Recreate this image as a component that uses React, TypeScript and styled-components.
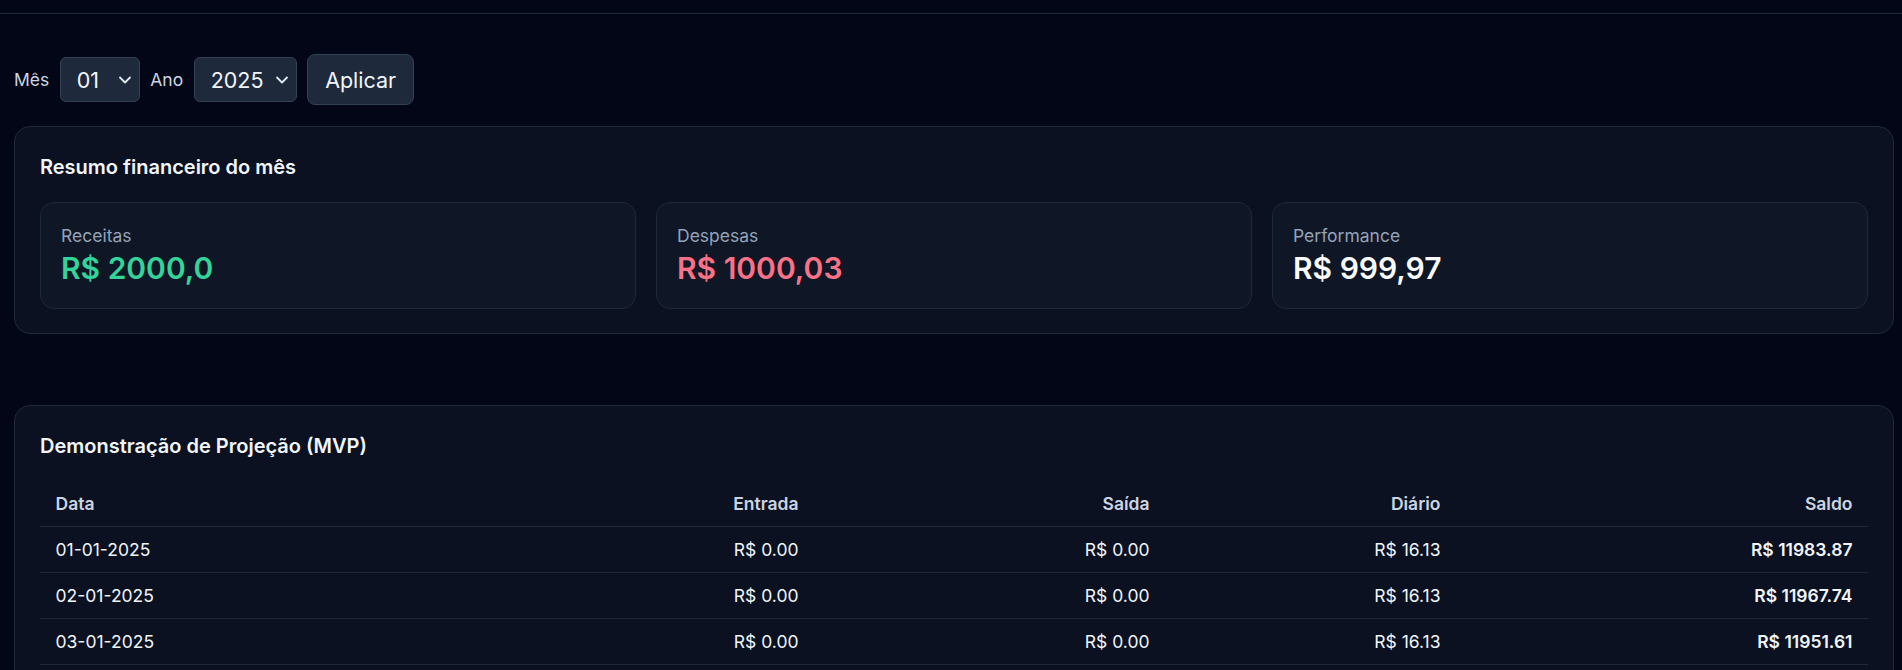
import React from "react";
import styled, { createGlobalStyle } from "styled-components";
import { ChevronDown } from "lucide-react";

const GlobalStyle = createGlobalStyle`
  html, body {
    margin: 0;
    padding: 0;
    background: #020617;
    color: #f1f5f9;
    font-family: Inter, "Noto Sans", "Liberation Sans", sans-serif;
  }
  * { box-sizing: border-box; }
`;

const Page = styled.div`
  min-height: 100vh;
  background: #020617;
`;

const TopBar = styled.header`
  height: 14px;
  border-bottom: 1px solid #1e293b;
`;

const Main = styled.main`
  padding: 40px 8px 40px 14px;
`;

const FilterBar = styled.form`
  display: flex;
  align-items: center;
  gap: 10.5px;
  margin-bottom: 21px;
`;

const FilterLabel = styled.label`
  font-size: 17.5px;
  line-height: 25px;
  color: #cbd5e1;
`;

const SelectWrap = styled.div<{ $w: number }>`
  position: relative;
  width: ${(p) => p.$w}px;
  height: 45px;
`;

const Select = styled.select`
  appearance: none;
  -webkit-appearance: none;
  width: 100%;
  height: 100%;
  margin: 0;
  padding: 0 0 0 16px;
  background: #1e293b;
  border: 1px solid #334155;
  border-radius: 6px;
  color: #f1f5f9;
  font-family: inherit;
  font-size: 21.5px;
  outline: none;
`;

const Chevron = styled(ChevronDown)`
  position: absolute;
  right: 5px;
  top: 50%;
  transform: translateY(-50%);
  color: #e2e8f0;
  pointer-events: none;
`;

const ApplyButton = styled.button`
  width: 107px;
  height: 51px;
  background: #1e293b;
  border: 1px solid #334155;
  border-radius: 8px;
  color: #f1f5f9;
  font-family: inherit;
  font-size: 21.5px;
  cursor: pointer;
`;

const Card = styled.section<{ $mb?: number }>`
  background: #0b1121;
  border: 1px solid #1e293b;
  border-radius: 16px;
  padding: 25px 25px 24px;
  margin-bottom: ${(p) => p.$mb ?? 0}px;
`;

const CardTitle = styled.h2`
  margin: 0 0 20px;
  font-size: 20px;
  line-height: 30px;
  font-weight: 600;
  color: #f1f5f9;
`;

const StatGrid = styled.div`
  display: grid;
  grid-template-columns: repeat(3, 1fr);
  gap: 20px;
`;

const StatCard = styled.div`
  background: #0f1626;
  border: 1px solid #1e293b;
  border-radius: 14px;
  padding: 20px;
`;

const StatLabel = styled.div`
  font-size: 17.5px;
  line-height: 25px;
  color: #94a3b8;
`;

const StatValue = styled.div<{ $color: string }>`
  font-size: 30px;
  line-height: 40px;
  font-weight: 600;
  color: ${(p) => p.$color};
`;

const Table = styled.table`
  width: 100%;
  border-collapse: collapse;
  table-layout: fixed;
`;

const Th = styled.th<{ $align?: string }>`
  padding: 10px 15.5px;
  font-size: 17.5px;
  line-height: 25px;
  font-weight: 600;
  color: #cbd5e1;
  text-align: ${(p) => p.$align ?? "left"};
  border-bottom: 1px solid #1e293b;
`;

const Td = styled.td<{ $align?: string; $strong?: boolean }>`
  padding: 10px 15.5px;
  font-size: 17.5px;
  line-height: 25px;
  font-weight: ${(p) => (p.$strong ? 600 : 400)};
  color: #f1f5f9;
  text-align: ${(p) => p.$align ?? "left"};
  border-bottom: 1px solid #1e293b;
  white-space: nowrap;
`;

const months = ["01", "02", "03", "04", "05", "06", "07", "08", "09", "10", "11", "12"];
const years = ["2024", "2025", "2026"];

const rows = Array.from({ length: 31 }, (_, i) => {
  const day = String(i + 1).padStart(2, "0");
  const saldo = 11983.87 - i * 16.13;
  return {
    data: `${day}-01-2025`,
    entrada: "R$ 0.00",
    saida: "R$ 0.00",
    diario: "R$ 16.13",
    saldo: `R$ ${saldo.toFixed(2)}`,
  };
});

export default function App() {
  return (
    <Page>
      <GlobalStyle />
      <TopBar />
      <Main>
        <FilterBar onSubmit={(e) => e.preventDefault()}>
          <FilterLabel htmlFor="mes">Mês</FilterLabel>
          <SelectWrap $w={80}>
            <Select id="mes" defaultValue="01">
              {months.map((m) => (
                <option key={m} value={m}>
                  {m}
                </option>
              ))}
            </Select>
            <Chevron size={20} strokeWidth={2.2} />
          </SelectWrap>
          <FilterLabel htmlFor="ano">Ano</FilterLabel>
          <SelectWrap $w={103}>
            <Select id="ano" defaultValue="2025">
              {years.map((y) => (
                <option key={y} value={y}>
                  {y}
                </option>
              ))}
            </Select>
            <Chevron size={20} strokeWidth={2.2} />
          </SelectWrap>
          <ApplyButton type="submit">Aplicar</ApplyButton>
        </FilterBar>

        <Card $mb={71}>
          <CardTitle>Resumo financeiro do mês</CardTitle>
          <StatGrid>
            <StatCard>
              <StatLabel>Receitas</StatLabel>
              <StatValue $color="#34d399">R$ 2000,0</StatValue>
            </StatCard>
            <StatCard>
              <StatLabel>Despesas</StatLabel>
              <StatValue $color="#fb7185">R$ 1000,03</StatValue>
            </StatCard>
            <StatCard>
              <StatLabel>Performance</StatLabel>
              <StatValue $color="#f8fafc">R$ 999,97</StatValue>
            </StatCard>
          </StatGrid>
        </Card>

        <Card>
          <CardTitle>Demonstração de Projeção (MVP)</CardTitle>
          <Table>
            <colgroup>
              <col style={{ width: 300 }} />
              <col style={{ width: 474 }} />
              <col style={{ width: 351 }} />
              <col style={{ width: 291 }} />
              <col style={{ width: 412 }} />
            </colgroup>
            <thead>
              <tr>
                <Th>Data</Th>
                <Th $align="right">Entrada</Th>
                <Th $align="right">Saída</Th>
                <Th $align="right">Diário</Th>
                <Th $align="right">Saldo</Th>
              </tr>
            </thead>
            <tbody>
              {rows.map((r) => (
                <tr key={r.data}>
                  <Td>{r.data}</Td>
                  <Td $align="right">{r.entrada}</Td>
                  <Td $align="right">{r.saida}</Td>
                  <Td $align="right">{r.diario}</Td>
                  <Td $align="right" $strong>
                    {r.saldo}
                  </Td>
                </tr>
              ))}
            </tbody>
          </Table>
        </Card>
      </Main>
    </Page>
  );
}
